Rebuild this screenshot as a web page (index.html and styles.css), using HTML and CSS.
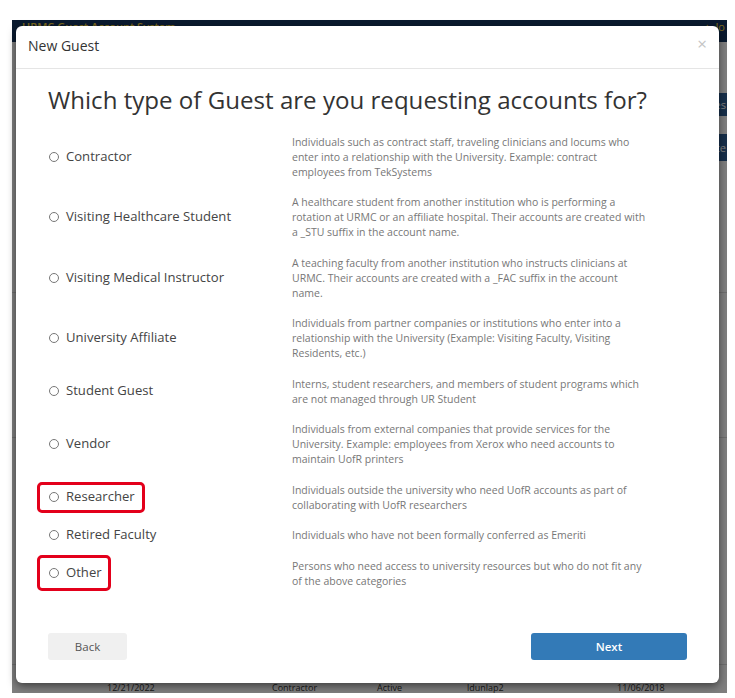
FILE: index.html
```html
<!DOCTYPE html>
<html>
<head>
<meta charset="utf-8">
<link rel="stylesheet" href="styles.css">
</head>
<body>
<div class="screen">
  <div class="page">
    <div class="topbar">
      <span class="brand">URMC Guest Account System</span>
      <span class="user">&#9650; Jo</span>
    </div>
    <div class="page-body">
      <div class="side-btn b1">Types</div>
      <div class="side-btn b2">Create</div>
      <div class="row-line l1"></div>
      <div class="row-line l2"></div>
      <div class="row-line l3"></div>
      <div class="table-row">
        <span>12/21/2022</span><span>Contractor</span><span>Active</span><span>ldunlap2</span><span>11/06/2018</span>
      </div>
    </div>
    <div class="overlay"></div>
  </div>

  <div class="modal">
    <div class="modal-header">
      <span class="modal-title">New Guest</span>
      <span class="close">&times;</span>
    </div>
    <div class="modal-body">
      <h1 class="question">Which type of Guest are you requesting accounts for?</h1>
      <div class="options">
        <div class="option">
          <label class="opt-label"><span class="radio"></span>Contractor</label>
          <p class="opt-desc">Individuals such as contract staff, traveling clinicians and locums who enter into a relationship with the University. Example: contract employees from TekSystems</p>
        </div>
        <div class="option">
          <label class="opt-label"><span class="radio"></span>Visiting Healthcare Student</label>
          <p class="opt-desc">A healthcare student from another institution who is performing a rotation at URMC or an affiliate hospital. Their accounts are created with a _STU suffix in the account name.</p>
        </div>
        <div class="option">
          <label class="opt-label"><span class="radio"></span>Visiting Medical Instructor</label>
          <p class="opt-desc">A teaching faculty from another institution who instructs clinicians at URMC. Their accounts are created with a _FAC suffix in the account name.</p>
        </div>
        <div class="option">
          <label class="opt-label"><span class="radio"></span>University Affiliate</label>
          <p class="opt-desc">Individuals from partner companies or institutions who enter into a relationship with the University (Example: Visiting Faculty, Visiting Residents, etc.)</p>
        </div>
        <div class="option">
          <label class="opt-label"><span class="radio"></span>Student Guest</label>
          <p class="opt-desc">Interns, student researchers, and members of student programs which are not managed through UR Student</p>
        </div>
        <div class="option">
          <label class="opt-label"><span class="radio"></span>Vendor</label>
          <p class="opt-desc">Individuals from external companies that provide services for the University. Example: employees from Xerox who need accounts to maintain UofR printers</p>
        </div>
        <div class="option">
          <label class="opt-label"><span class="radio"></span>Researcher<span class="mark mark-researcher"></span></label>
          <p class="opt-desc">Individuals outside the university who need UofR accounts as part of collaborating with UofR researchers</p>
        </div>
        <div class="option">
          <label class="opt-label"><span class="radio"></span>Retired Faculty</label>
          <p class="opt-desc">Individuals who have not been formally conferred as Emeriti</p>
        </div>
        <div class="option">
          <label class="opt-label"><span class="radio"></span>Other<span class="mark mark-other"></span></label>
          <p class="opt-desc">Persons who need access to university resources but who do not fit any of the above categories</p>
        </div>
      </div>
    </div>
    <div class="modal-footer">
      <button class="btn btn-back">Back</button>
      <button class="btn btn-next">Next</button>
    </div>
  </div>
</div>
</body>
</html>
```

FILE: styles.css
```css
* { box-sizing: border-box; }
html, body { margin: 0; padding: 0; background: #ffffff; }
body { font-family: "Open Sans", "Noto Sans", Arial, sans-serif; }

.screen {
  position: relative;
  width: 715px;
  height: 673px;
  margin: 20px 0 0 12px;
}

.page {
  position: absolute;
  inset: 0;
  background: #ffffff;
  overflow: hidden;
}

.topbar {
  height: 22px;
  background: #15345e;
  display: flex;
  justify-content: space-between;
  align-items: flex-start;
  padding: 1px 2px 0 10px;
  font-size: 11px;
  line-height: 12px;
  color: #f3d13b;
}
.brand { font-weight: 600; }

.page-body { position: relative; height: 651px; }

.side-btn {
  position: absolute;
  right: 0;
  width: 60px;
  background: #2e5f94;
  color: #ffffff;
  font-size: 11px;
  padding-right: 1px;
  display: flex;
  align-items: center;
  justify-content: flex-end;
}
.b1 { top: 51px; height: 23px; }
.b2 { top: 92px; height: 27px; }

.row-line { position: absolute; left: 0; right: 0; height: 1px; background: #dddddd; }
.l1 { top: 250px; }
.l2 { top: 395px; }
.l3 { top: 622px; }

.table-row {
  position: absolute;
  left: 0;
  right: 0;
  top: 641px;
  display: flex;
  font-size: 9px;
  line-height: 10px;
  color: #333;
  padding-left: 95px;
}
.table-row span:nth-child(1) { width: 165px; }
.table-row span:nth-child(2) { width: 105px; }
.table-row span:nth-child(3) { width: 90px; }
.table-row span:nth-child(4) { width: 150px; }

.overlay {
  position: absolute;
  inset: 0;
  background: rgba(0, 0, 0, 0.5);
}

.modal {
  position: absolute;
  left: 4px;
  top: 6px;
  width: 703px;
  height: 657px;
  background: #ffffff;
  border-radius: 6px;
  box-shadow: 0 3px 9px rgba(0,0,0,0.5);
  display: flex;
  flex-direction: column;
}

.modal-header {
  height: 43px;
  border-bottom: 1px solid #e5e5e5;
  display: flex;
  align-items: center;
  justify-content: space-between;
  padding: 0 12px 4px 12px;
}
.modal-title { font-size: 14px; color: #333; }
.close { font-size: 17px; color: #c4c4c4; line-height: 1; margin-top: -4px; }

.modal-body {
  flex: 1;
  padding: 14px 32px 0 32px;
}

.question {
  margin: 0;
  font-size: 24.1px;
  font-weight: 400;
  color: #333;
  line-height: 34px;
}

.options {
  margin-top: 10px;
  display: flex;
  flex-direction: column;
}

.option {
  display: grid;
  grid-template-columns: 244px 357px;
  align-items: center;
  padding: 7.75px 0;
}

.opt-label {
  position: relative;
  display: flex;
  align-items: center;
  font-size: 13.1px;
  color: #444;
  line-height: 15px;
  margin-top: -2px;
}

.radio {
  width: 10px;
  height: 10px;
  border: 1px solid #777;
  border-radius: 50%;
  margin: 1px 7px 0 1px;
  flex: none;
}

.opt-desc {
  margin: 0;
  font-size: 10.5px;
  line-height: 15px;
  color: #777;
}

.mark {
  position: absolute;
  left: -11px;
  border: 3px solid #e3001b;
  border-radius: 5px;
}
.mark-researcher { width: 108px; top: -7px; height: 31px; }
.mark-other { width: 74px; top: -10px; height: 36px; }

.modal-footer {
  display: flex;
  justify-content: space-between;
  padding: 0 32px 23px 32px;
}

.btn {
  height: 27px;
  border: none;
  border-radius: 3px;
  font-family: "Open Sans", "Noto Sans", Arial, sans-serif;
  font-size: 11.5px;
  cursor: pointer;
}
.btn-back { width: 79px; background: #f0f0f0; color: #555; }
.btn-next { width: 156px; background: #337ab7; color: #ffffff; font-weight: 600; }
```
